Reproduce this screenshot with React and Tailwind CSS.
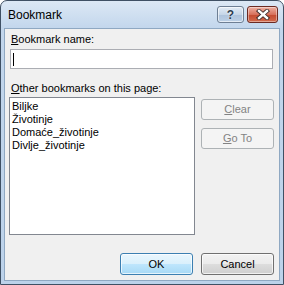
export default function App() {
  const font = { fontFamily: '"Liberation Sans", Arial, sans-serif' };
  return (
    <div
      className="w-[284px] h-[285px] flex flex-col border border-[#3f5064] rounded-t-[7px] px-[3px] pb-[3px] bg-[linear-gradient(#dce8f5,#c2d6ec_28px,#bcd2ea)] overflow-hidden"
      style={font}
    >
      {/* title bar */}
      <div className="h-[25px] flex items-start shrink-0">
        <span className="ml-[4px] mt-[7px] text-[12px] leading-[14px] text-black">Bookmark</span>
        <div className="ml-auto mt-[5px] flex gap-[3px] mr-[2px]">
          <div className="w-[27px] h-[17px] rounded-[3px] border border-[#6e7f94] bg-[linear-gradient(#e3ecf6,#c6d6e8_50%,#aec3dc_51%,#bcd0e6)] flex items-center justify-center shadow-[inset_0_0_0_1px_rgba(255,255,255,0.6)]">
            <span className="text-[12px] font-bold leading-none text-[#2d3d52] [text-shadow:0_0_2px_#fff]">?</span>
          </div>
          <div className="w-[31px] h-[17px] rounded-[3px] border border-[#6b2a22] bg-[linear-gradient(#eeb1a3,#d7715c_50%,#c34a30_51%,#d26a4c)] flex items-center justify-center shadow-[inset_0_0_0_1px_rgba(255,255,255,0.4)]">
            <svg width="14" height="11" viewBox="0 0 14 11">
              <path d="M3 2 L11 9 M11 2 L3 9" stroke="#3a2a2a" strokeWidth="4.2" strokeLinecap="square" />
              <path d="M3 2 L11 9 M11 2 L3 9" stroke="#fff" strokeWidth="2.4" strokeLinecap="square" />
            </svg>
          </div>
        </div>
      </div>

      {/* client area */}
      <div className="flex-1 flex flex-col bg-[#f0f0f0] border border-[#8fa8c2] mt-[2px] text-[11px] text-black">
        <div className="mt-[4px] ml-[6px] h-[13px] leading-[13px]">
          <span className="underline underline-offset-1">B</span>ookmark name:
        </div>
        <div className="mt-[3px] ml-[5px] w-[263px] h-[20px] bg-white border border-[#abadb3] flex items-center">
          <div className="ml-[2px] w-px h-[13px] bg-black" />
        </div>
        <div className="mt-[13px] ml-[6px] h-[13px] leading-[13px]">
          <span className="underline underline-offset-1">O</span>ther bookmarks on this page:
        </div>
        <div className="mt-[2px] ml-[4px] flex">
          <div className="w-[186px] h-[138px] bg-white border border-[#828790] pt-[2px] pl-[2px] leading-[13px]">
            <div>Biljke</div>
            <div>Životinje</div>
            <div>Domaće_životinje</div>
            <div>Divlje_životinje</div>
          </div>
          <div className="ml-[6px] flex flex-col">
            <div className="mt-[2px] w-[73px] h-[21px] rounded-[3px] border border-[#adb2b5] bg-[#f4f4f4] text-[#838383] flex items-center justify-center">
              <span><span className="underline underline-offset-1">C</span>lear</span>
            </div>
            <div className="mt-[8px] w-[73px] h-[21px] rounded-[3px] border border-[#adb2b5] bg-[#f4f4f4] text-[#838383] flex items-center justify-center">
              <span><span className="underline underline-offset-1">G</span>o To</span>
            </div>
          </div>
        </div>
        <div className="mt-auto mb-[5px] mr-[5px] flex justify-end gap-[8px]">
          <div className="w-[73px] h-[22px] rounded-[3px] border border-[#3c7fb1] bg-[linear-gradient(#eaf6fd,#d9f0fc_50%,#bee6fd_51%,#a7d9f5)] shadow-[inset_0_0_0_1px_rgba(255,255,255,0.7)] flex items-center justify-center">
            OK
          </div>
          <div className="w-[73px] h-[22px] rounded-[3px] border border-[#707070] bg-[linear-gradient(#f2f2f2,#ebebeb_50%,#dddddd_51%,#cfcfcf)] shadow-[inset_0_0_0_1px_rgba(255,255,255,0.7)] flex items-center justify-center">
            Cancel
          </div>
        </div>
      </div>
    </div>
  );
}
